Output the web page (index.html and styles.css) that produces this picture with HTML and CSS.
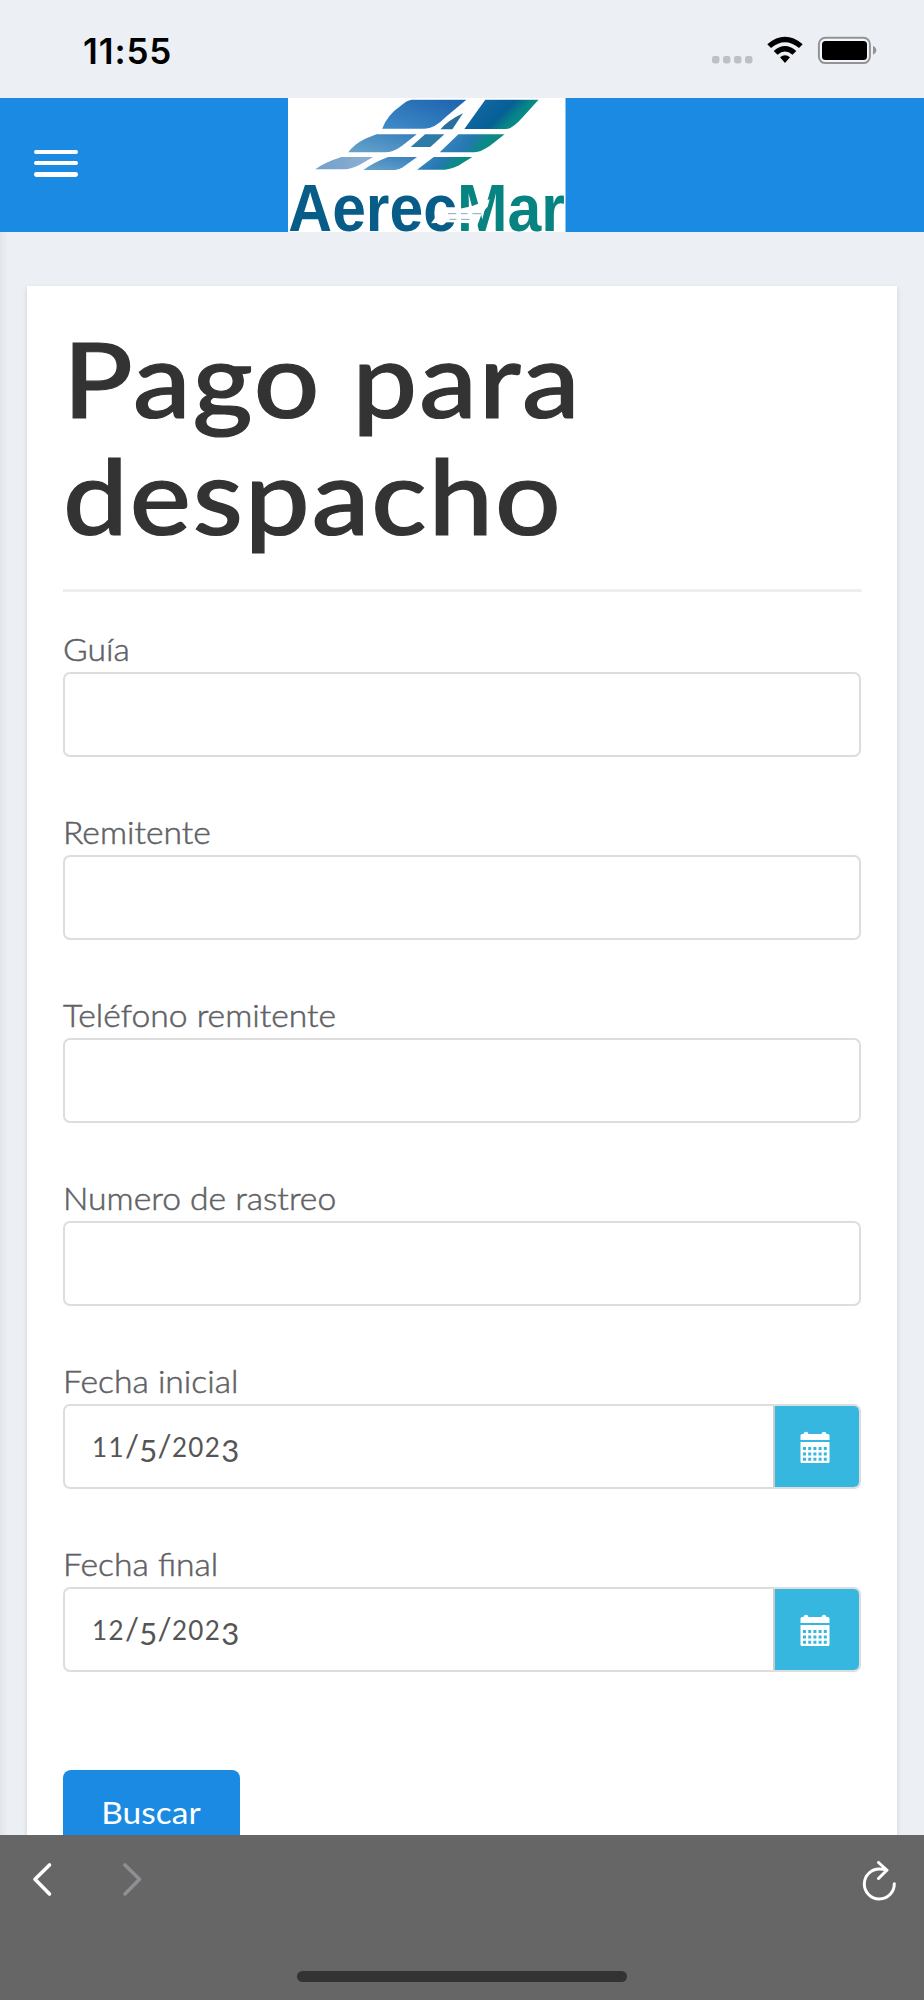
FILE: index.html
```html
<!DOCTYPE html>
<html lang="es">
<head>
<meta charset="utf-8">
<title>Pago para despacho</title>
<link rel="stylesheet" href="styles.css">
</head>
<body>
<div class="screen">
  <div class="status">
    <span class="time">11:55</span>
    <svg class="status-icons" viewBox="0 0 170 30" width="170" height="30">
      <g fill="#bfc0c4"><rect x="2" y="20" width="7.5" height="7.5" rx="2.4"/><rect x="13" y="20" width="7.5" height="7.5" rx="2.4"/><rect x="24" y="20" width="7.5" height="7.5" rx="2.4"/><rect x="35" y="20" width="7.5" height="7.5" rx="2.4"/></g>
      <path d="M57.300 8.200 Q75 -6.600 92.700 8.200 L89 12.100 Q75 .5 61 12.100Z M63.700 15 Q75 5.200 86.300 15 L82.500 18.800 Q75 12.300 67.500 18.800Z M70 21.200 Q75 17.300 80 21.200 L75 27Z"/>
      <rect x="108.900" y="1.700" width="51" height="25.400" rx="6.500" fill="#f4f6f9" stroke="#929396" stroke-width="2"/>
      <rect x="112" y="5" width="45" height="19" rx="3.500"/>
      <path d="M163 9.800 Q166.300 11.500 166.300 14.300 T163 18.800Z" fill="#929396"/>
    </svg>
  </div>
  <header class="header">
    <div class="burger"><i></i><i></i><i></i></div>
    <svg class="logo" viewBox="54 24 834 402" preserveAspectRatio="none">
      <defs>
        <linearGradient id="a" x1="0" y1="1" x2="1" y2="0"><stop offset="0" stop-color="#3f8bc8"/><stop offset="1" stop-color="#1c62ad"/></linearGradient>
        <linearGradient id="b" x1="0" y1="1" x2="1" y2="0"><stop offset="0" stop-color="#69a5cb"/><stop offset="1" stop-color="#367ebd"/></linearGradient>
        <linearGradient id="c" x1="0" y1="0" x2="1" y2="0"><stop offset="0" stop-color="#729fc8"/><stop offset="1" stop-color="#8eb1d4"/></linearGradient>
        <linearGradient id="d" x1="0" y1="0" x2="1" y2=".4"><stop offset="0" stop-color="#176caa"/><stop offset=".6" stop-color="#075f96"/><stop offset=".78" stop-color="#078487"/><stop offset="1" stop-color="#0b9185"/></linearGradient>
        <linearGradient id="e" x1="0" y1="0" x2="1" y2=".2"><stop offset="0" stop-color="#3e8ac8"/><stop offset=".5" stop-color="#2678b0"/><stop offset=".75" stop-color="#0b8a88"/><stop offset="1" stop-color="#0b8a80"/></linearGradient>
      </defs>
      <rect x="54" y="24" width="834" height="402" fill="#fff"/>
      <path fill="url(#a)" d="M425 29H590L529 80Q494 116 464 116H337Q352 75 393 47Q411 31 425 29Z"/>
      <path fill="#286f9f" d="M580 70L548 118H512Q535 91 580 70Z"/>
      <path fill="url(#d)" d="M647 29H807L760 81Q728 117 710 117H584Z"/>
      <path fill="url(#b)" d="M320 133H441L397 167Q370 187 345 187H235Q252 163 286 146Z"/>
      <path fill="#2d7ba7" d="M466 133H524L482 171H423Z"/>
      <path fill="url(#e)" d="M566 133H705L663 166Q633 187 615 187H510Z"/>
      <path fill="url(#c)" d="M215 201H310L267 226Q240 238 226 238H136Q166 216 215 201Z"/>
      <path fill="url(#b)" d="M355 201H442L399 232Q387 240 375 240H280Q310 218 355 201Z"/>
      <path fill="url(#e)" d="M492 201H608L568 226Q540 239 525 239H442Z"/>
      <text class="logo-text" x="55" y="424" textLength="831" lengthAdjust="spacingAndGlyphs" fill="#075c88">Aerec<tspan fill="#078482">Mar</tspan></text>
      <path fill="#fff" d="M484 400Q502 365 552 360L606 349L660 328L654 350L637 368L617 424H597L600 400L538 397Z"/>
      <path fill="none" stroke="#8ca9b4" stroke-width="3" d="M535 371H560M574 371H594M608 371H635M539 388H560M574 388H600"/>
    </svg>
  </header>
  <main class="content">
    <section class="card">
      <h1>Pago para<br>despacho</h1>
      <form>
        <div class="field"><label>Guía</label><div class="input"></div></div>
        <div class="field"><label>Remitente</label><div class="input"></div></div>
        <div class="field"><label>Teléfono remitente</label><div class="input"></div></div>
        <div class="field"><label>Numero de rastreo</label><div class="input"></div></div>
        <div class="field"><label>Fecha inicial</label>
          <div class="input"><span class="date"><b>11</b>/<u>5</u>/<b>202</b><u>3</u></span><span class="addon"><svg width="30" height="32" viewBox="0 0 30 32"><path fill="#fff" d="M.5 9V4.500Q.5 3 2 3H3.500Q4 .7 6 .7T8.500 3H21.500Q22 .7 24 .7T26.500 3H28Q29.500 3 29.500 4.500V9Z M.5 11H29.500V30.500Q29.500 32 28 32H2Q.5 32 .5 30.500Z"/><path stroke="#36b7e0" stroke-width="3" stroke-dasharray="3 2.200" d="M3 17.500H27M3 23H27M3 28.300H27"/></svg></span></div></div>
        <div class="field"><label>Fecha final</label>
          <div class="input"><span class="date"><b>12</b>/<u>5</u>/<b>202</b><u>3</u></span><span class="addon"><svg width="30" height="32" viewBox="0 0 30 32"><path fill="#fff" d="M.5 9V4.500Q.5 3 2 3H3.500Q4 .7 6 .7T8.500 3H21.500Q22 .7 24 .7T26.500 3H28Q29.500 3 29.500 4.500V9Z M.5 11H29.500V30.500Q29.500 32 28 32H2Q.5 32 .5 30.500Z"/><path stroke="#36b7e0" stroke-width="3" stroke-dasharray="3 2.200" d="M3 17.500H27M3 23H27M3 28.300H27"/></svg></span></div></div>
        <div class="button"><span>Buscar</span></div>
      </form>
    </section>
  </main>
  <nav class="toolbar">
    <div class="tools">
      <svg width="110" height="36" viewBox="0 0 110 36" fill="none" stroke-width="3.600" stroke-linecap="round" stroke-linejoin="round"><path stroke="#fff" d="M17.500 4L3 18.200L17.500 33"/><path stroke="#8e8e93" d="M93 4L107.500 18.200L93 33"/></svg>
      <svg width="36" height="42" viewBox="0 0 36 42" fill="none" stroke="#fff" stroke-width="3" stroke-linecap="round" stroke-linejoin="round"><path d="M26 9.200Q22 8 19 8A15 15 0 1 0 33.300 22.700M17.500 1.500L25.800 9.200L17.500 17.500"/></svg>
    </div>
    <div class="home"></div>
  </nav>
</div>
</body>
</html>
```
FILE: styles.css
```css
* { box-sizing: border-box; }
body { margin: 0; background: #ecf0f5; font-family: Lato, sans-serif; }
.screen { width: 924px; height: 2000px; display: flex; flex-direction: column; overflow: hidden; }
.status { height: 98px; flex: none; display: flex; justify-content: space-between; padding: 35px 44px 0 83px; }
.time { font: 600 35px/32px Inter, sans-serif; color: #000; letter-spacing: .9px; }
.status-icons { display: block; margin-top: 1px; }
.header { height: 134px; flex: none; display: flex; background: #1a8ae2; padding-left: 34px; }
.burger { width: 254px; padding-top: 51.500px; display: flex; flex-direction: column; gap: 6.500px; }
.burger i { width: 44px; height: 4.700px; border-radius: 2.400px; background: #fff; flex: none; }
.logo { width: 277.500px; height: 134px; display: block; overflow: visible; }
.logo-text { font: bold 198px "Liberation Sans", sans-serif; }
.content { flex: 1; min-height: 0; padding: 54px 27px 0; background: linear-gradient(90deg, #e1e5ea, #ecf0f5 8px); }
.card { height: 1600px; background: #fff; padding: 33px 36px 0; box-shadow: 0 2px 5px rgba(0,0,0,.13); }
h1 { margin: 0; height: 273px; width: 725.500px; border-bottom: 3px solid #eee; font-size: 105px; line-height: 116.500px; font-weight: 500; color: #333; white-space: nowrap; transform: scaleX(1.1); transform-origin: 0 0; letter-spacing: 1.700px; -webkit-text-stroke: 1.200px #333; }
form { padding-top: 36px; }
.field { height: 183.100px; }
label { display: block; width: 700px; height: 44px; line-height: 42px; font-size: 31px; font-weight: 300; color: #606165; white-space: nowrap; transform: scaleX(1.085); transform-origin: 0 0; -webkit-text-stroke: .5px #606165; }
.input { height: 85px; border: 2px solid #ddd; border-radius: 7px; display: flex; justify-content: space-between; overflow: hidden; }
.date { padding-left: 27px; line-height: 79px; font-size: 31px; color: #555; white-space: nowrap; letter-spacing: .3px; }
.date b { font-weight: 400; font-size: 26px; letter-spacing: 1.400px; }
.date u { text-decoration: none; display: inline-block; line-height: 30px; transform: translateY(4.500px); }
.addon { width: 88px; margin: -2px -2px -2px 0; padding-right: 4px; border: 2px solid #ccc; border-radius: 0 7px 7px 0; background: #36b7e0; display: flex; align-items: center; justify-content: center; }
.button { width: 177px; height: 85px; margin-top: 43px; border-radius: 8px; background: #1a8ae2; color: #fff; font-size: 31px; line-height: 85px; text-align: center; }
.button span { display: inline-block; transform: translateX(-1px) scaleX(1.08); }
.toolbar { height: 165px; flex: none; background: #666; }
.tools { display: flex; justify-content: space-between; padding: 26px 27px 0 32px; }
.home { width: 330px; height: 11px; border-radius: 6px; background: #333; margin: 68px auto 0; }
```
